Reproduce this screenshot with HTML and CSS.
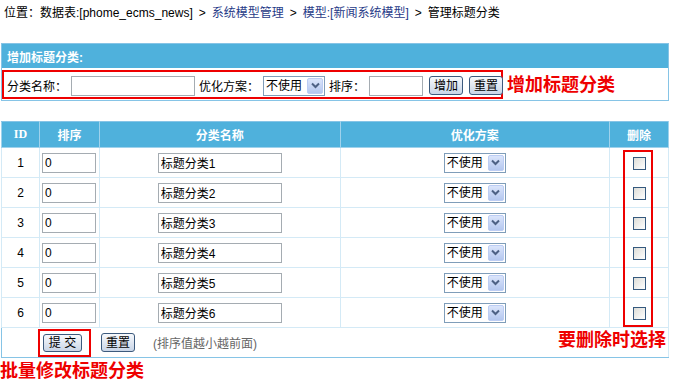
FILE: index.html
```html
<!DOCTYPE html>
<html lang="zh-CN">
<head>
  <meta charset="UTF-8">
  <meta name="viewport" content="width=device-width, initial-scale=1.0">
  <title>管理标题分类</title>
  <link rel="stylesheet" href="styles.css">
</head>
<body>
  <div class="nav">位置：数据表:[phome_ecms_news]<span class="sep">&gt;</span><a href="#">系统模型管理</a><span class="sep">&gt;</span><a href="#">模型:[新闻系统模型]</a><span class="sep">&gt;</span>管理标题分类</div>

  <table class="box add-box">
    <tr class="header"><td class="title">增加标题分类:</td></tr>
    <tr>
      <td>
        <div class="add-row">
          <form class="add-form mark">
            <label>分类名称：</label>
            <input type="text" class="name-input">
            <label>优化方案：</label>
            <span class="select"><select><option>不使用</option></select><span class="arrow"><svg width="9" height="7" viewBox="0 0 9 7"><path d="M1 1.5 L4.5 5 L8 1.5" fill="none" stroke="#4d6185" stroke-width="2"/></svg></span></span>
            <label>排序：</label>
            <input type="text" class="sort-input">
            <button type="button" class="btn">增加</button>
            <button type="button" class="btn">重置</button>
          </form>
          <span class="note">增加标题分类</span>
        </div>
      </td>
    </tr>
  </table>

  <div class="list-wrap">
    <table class="box list">
      <colgroup><col class="c-id"><col class="c-sort"><col class="c-name"><col class="c-opt"><col class="c-del"></colgroup>
      <tr class="header">
        <td class="serif">ID</td><td>排序</td><td>分类名称</td><td>优化方案</td><td>删除</td>
      </tr>
      <tr><td>1</td><td class="left"><input type="text" class="sort-input" value="0"></td><td><input type="text" class="name-input" value="标题分类1"></td><td><span class="select"><select><option>不使用</option></select><span class="arrow"><svg width="9" height="7" viewBox="0 0 9 7"><path d="M1 1.5 L4.5 5 L8 1.5" fill="none" stroke="#4d6185" stroke-width="2"/></svg></span></span></td><td><input type="checkbox" class="check"></td></tr>
      <tr><td>2</td><td class="left"><input type="text" class="sort-input" value="0"></td><td><input type="text" class="name-input" value="标题分类2"></td><td><span class="select"><select><option>不使用</option></select><span class="arrow"><svg width="9" height="7" viewBox="0 0 9 7"><path d="M1 1.5 L4.5 5 L8 1.5" fill="none" stroke="#4d6185" stroke-width="2"/></svg></span></span></td><td><input type="checkbox" class="check"></td></tr>
      <tr><td>3</td><td class="left"><input type="text" class="sort-input" value="0"></td><td><input type="text" class="name-input" value="标题分类3"></td><td><span class="select"><select><option>不使用</option></select><span class="arrow"><svg width="9" height="7" viewBox="0 0 9 7"><path d="M1 1.5 L4.5 5 L8 1.5" fill="none" stroke="#4d6185" stroke-width="2"/></svg></span></span></td><td><input type="checkbox" class="check"></td></tr>
      <tr><td>4</td><td class="left"><input type="text" class="sort-input" value="0"></td><td><input type="text" class="name-input" value="标题分类4"></td><td><span class="select"><select><option>不使用</option></select><span class="arrow"><svg width="9" height="7" viewBox="0 0 9 7"><path d="M1 1.5 L4.5 5 L8 1.5" fill="none" stroke="#4d6185" stroke-width="2"/></svg></span></span></td><td><input type="checkbox" class="check"></td></tr>
      <tr><td>5</td><td class="left"><input type="text" class="sort-input" value="0"></td><td><input type="text" class="name-input" value="标题分类5"></td><td><span class="select"><select><option>不使用</option></select><span class="arrow"><svg width="9" height="7" viewBox="0 0 9 7"><path d="M1 1.5 L4.5 5 L8 1.5" fill="none" stroke="#4d6185" stroke-width="2"/></svg></span></span></td><td><input type="checkbox" class="check"></td></tr>
      <tr><td>6</td><td class="left"><input type="text" class="sort-input" value="0"></td><td><input type="text" class="name-input" value="标题分类6"></td><td><span class="select"><select><option>不使用</option></select><span class="arrow"><svg width="9" height="7" viewBox="0 0 9 7"><path d="M1 1.5 L4.5 5 L8 1.5" fill="none" stroke="#4d6185" stroke-width="2"/></svg></span></span></td><td><input type="checkbox" class="check"></td></tr>
      <tr class="foot-row">
        <td colspan="5">
          <div class="foot">
            <span class="mark submit-mark"><button type="button" class="btn wide">提 交</button></span>
            <button type="button" class="btn">重置</button>
            <span class="hint">(排序值越小越前面)</span>
            <span class="note del-note">要删除时选择</span>
          </div>
        </td>
      </tr>
    </table>
    <span class="del-mark"></span>
  </div>
  <div class="note bottom-note">批量修改标题分类</div>
</body>
</html>
```

FILE: styles.css
```css
body {
  margin: 0;
  font-family: "Liberation Sans", "Noto Sans CJK SC", sans-serif;
  font-size: 12px;
  color: #000;
  background: #fff;
}
a {
  color: #1f3a87;
  text-decoration: none;
}
.nav {
  padding: 4px 0 0 4px;
  line-height: 18px;
  margin-bottom: 21px;
  white-space: nowrap;
}
.sep {
  margin: 0 6px;
}
.box {
  border-collapse: collapse;
  width: 668px;
  margin-left: 1px;
  border: 1px solid #86c4e6;
}
.box td {
  padding: 0;
}
.header td {
  background: #4fb1dc;
  color: #fff;
  font-weight: bold;
  text-align: center;
}
.add-box .header td {
  height: 24px;
  text-align: left;
  padding-left: 5px;
}
.add-box td {
  height: 32px;
}
.add-row {
  display: flex;
  align-items: center;
}
.mark {
  border: 2px solid #e00;
}
.add-form {
  display: flex;
  align-items: center;
  gap: 4px;
  margin: 0;
  width: 501px;
  height: 29px;
  box-sizing: border-box;
  padding: 3px 0 0 3px;
  flex-shrink: 0;
}
.add-form > * {
  flex-shrink: 0;
  white-space: nowrap;
}
.add-form .btn {
  margin-left: 2px;
}
.note {
  color: #e00;
  font-size: 18px;
  font-weight: bold;
  line-height: 20px;
  white-space: nowrap;
}
.add-row .note {
  margin-left: 4px;
  padding-top: 2px;
}
input[type="text"] {
  height: 20px;
  box-sizing: border-box;
  border: 1px solid #a5acb2;
  padding: 0 2px;
  font: 12px "Liberation Sans", "Noto Sans CJK SC", sans-serif;
  margin: 0;
}
.name-input {
  width: 124px;
}
.sort-input {
  width: 54px;
}
.select {
  display: inline-flex;
  align-items: center;
  width: 62px;
  height: 20px;
  box-sizing: border-box;
  border: 1px solid #7f9db9;
  background: #fff;
  vertical-align: middle;
}
.select select {
  appearance: none;
  -webkit-appearance: none;
  border: none;
  background: none;
  padding: 0 0 0 2px;
  margin: 0;
  width: 43px;
  font: 12px "Liberation Sans", "Noto Sans CJK SC", sans-serif;
  color: #000;
}
.arrow {
  width: 16px;
  height: 16px;
  margin-left: auto;
  margin-right: 1px;
  box-sizing: border-box;
  border: 1px solid #bccdf4;
  border-radius: 2px;
  background: linear-gradient(#dbe5fb, #b4c7ef);
  display: flex;
  align-items: center;
  justify-content: center;
}
.btn {
  height: 19px;
  width: 34px;
  padding: 0;
  border: 1px solid #3c5a7d;
  border-radius: 3px;
  background: linear-gradient(#f7f9fc, #c9d5e7);
  font: 12px "Liberation Sans", "Noto Sans CJK SC", sans-serif;
  color: #000;
  line-height: 16px;
}
.btn.wide {
  width: 39px;
  height: 18px;
}
.list-wrap {
  position: relative;
  margin-top: 20px;
}
.list td {
  border: 1px solid #d4eaf6;
  height: 29px;
  text-align: center;
}
.list .header td {
  height: 25px;
  border-color: #9fd2ec;
  border-top-color: #86c4e6;
}
.list td.left {
  text-align: left;
  padding-left: 2px;
}
.serif {
  font-family: "Liberation Serif", serif;
}
.c-id { width: 38px; }
.c-sort { width: 60px; }
.c-name { width: 241px; }
.c-opt { width: 270px; }
.c-del { width: 59px; }
.check {
  appearance: none;
  -webkit-appearance: none;
  width: 13px;
  height: 13px;
  margin: 0;
  border: 1px solid #35597e;
  background: linear-gradient(135deg, #dcdcd7, #fff);
  vertical-align: middle;
}
.list .foot-row td {
  text-align: left;
  border-left-color: #86c4e6;
  border-bottom-color: #86c4e6;
}
.foot {
  display: flex;
  align-items: center;
  padding-left: 36px;
  padding-right: 2px;
}
.submit-mark {
  display: flex;
  padding: 3px 7px 3px 3px;
}
.foot > .btn {
  margin-left: 10px;
}
.hint {
  color: #666;
  margin-left: 18px;
}
.del-note {
  margin-left: auto;
  margin-top: -6px;
}
.del-mark {
  position: absolute;
  left: 623px;
  top: 29px;
  width: 26px;
  height: 173px;
  border: 2px solid #e00;
}
.bottom-note {
  margin-top: 2px;
  line-height: 22px;
}
```
